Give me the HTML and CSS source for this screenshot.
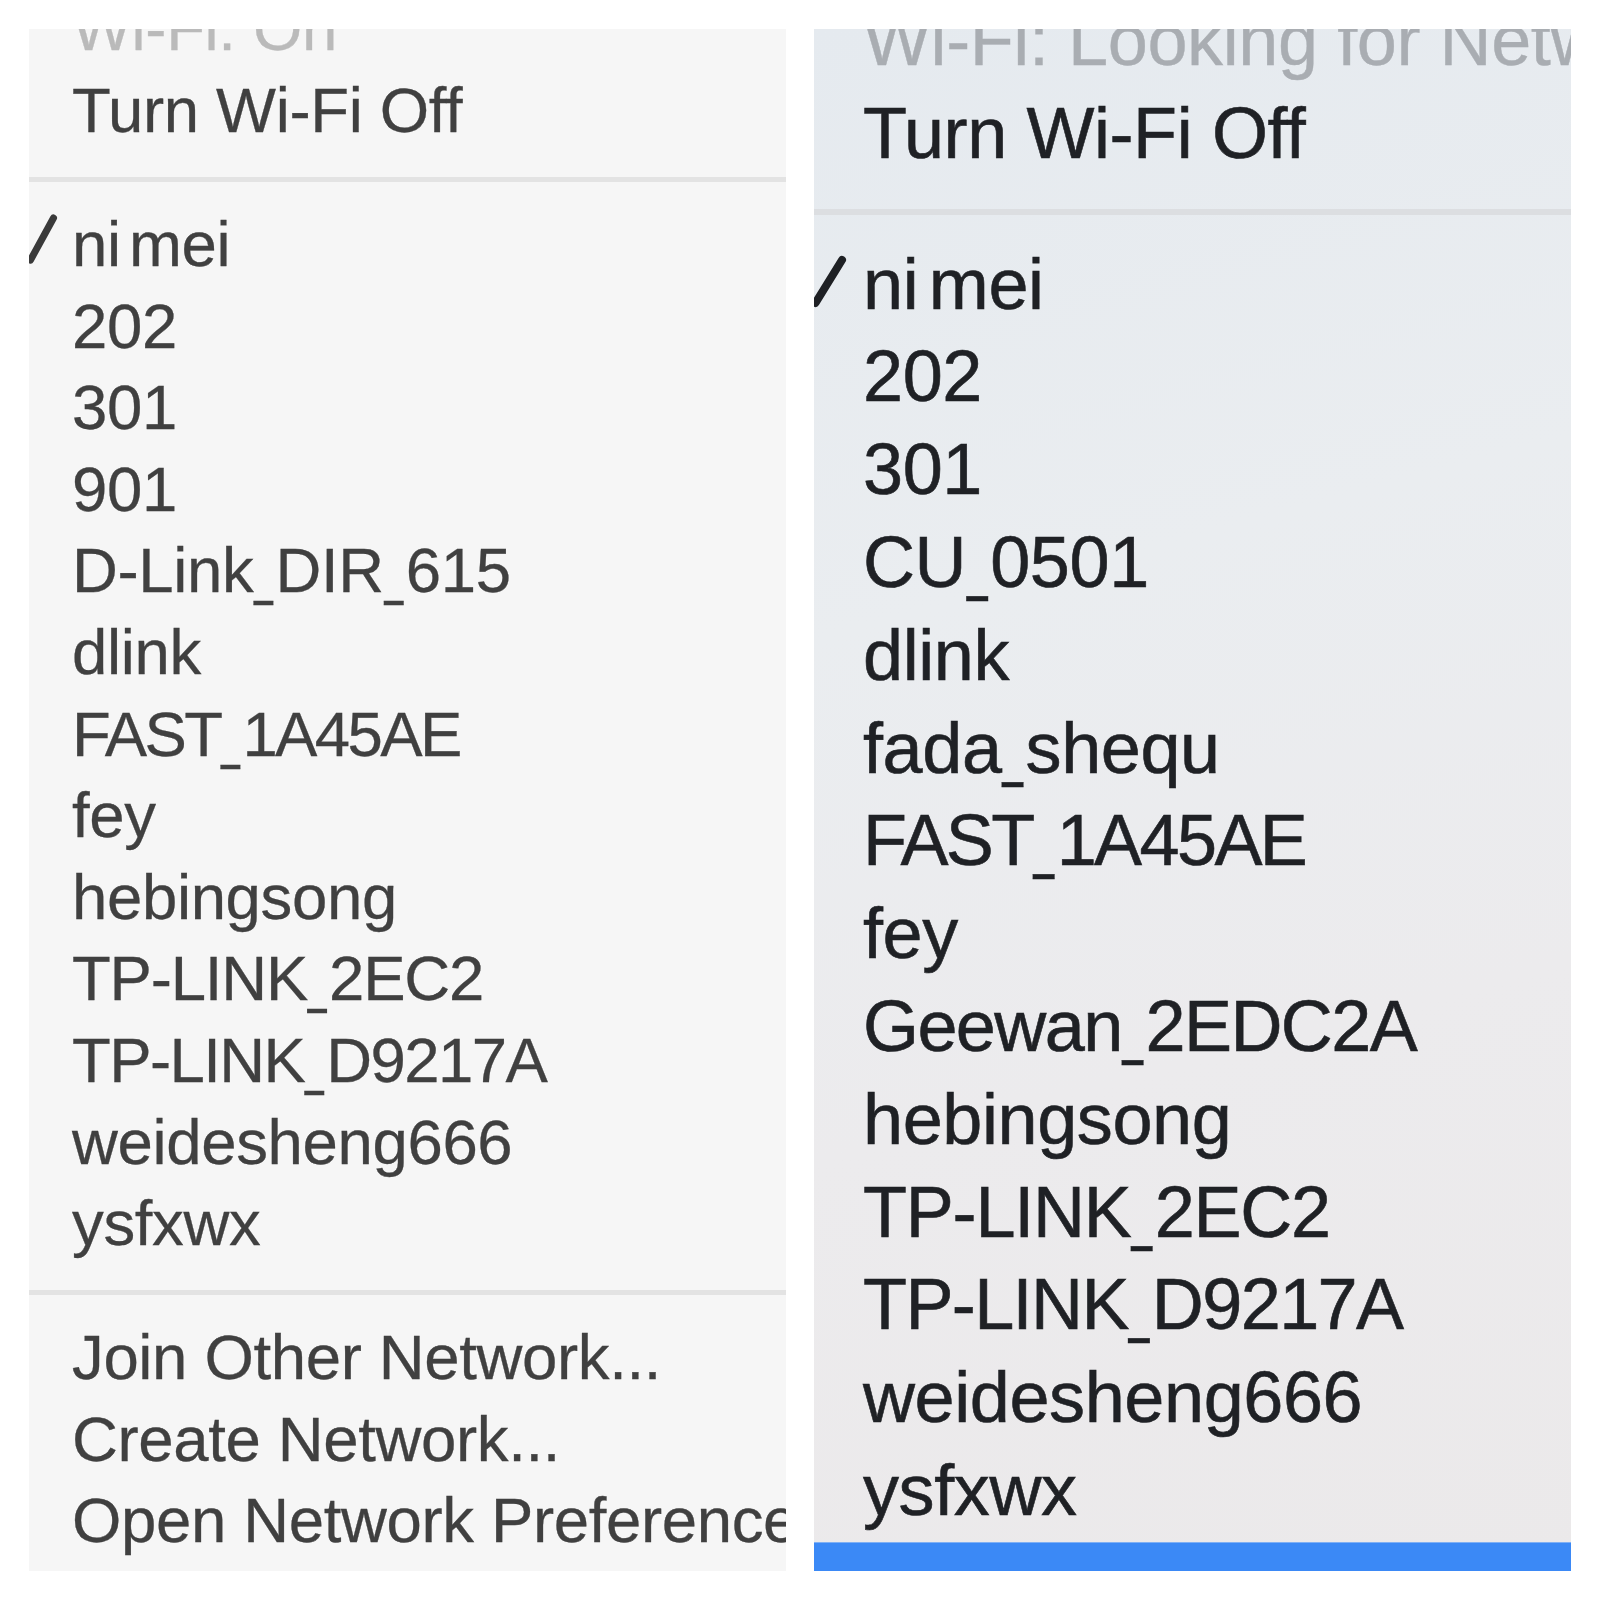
FILE: index.html
```html
<!DOCTYPE html>
<html lang="en">
<head>
<meta charset="utf-8">
<title>Wi-Fi menus</title>
<link rel="stylesheet" href="styles.css">
</head>
<body>
<div class="screen">
  <section class="menu menu-left">
    <div class="menu-inner">
      <div class="item title">Wi-Fi: On</div>
      <div class="item">Turn Wi-Fi Off</div>
      <div class="sep"></div>
      <div class="item checked"><span class="check"><svg viewBox="0 0 43 81.6" width="43" height="81.6"><path d="M1.5 56 L24.5 14" stroke="#3a3a3a" stroke-width="7" stroke-linecap="round" fill="none"/></svg></span><span class="tight">ni mei</span></div>
      <div class="item">202</div>
      <div class="item">301</div>
      <div class="item">901</div>
      <div class="item">D-Link<span class="us">_</span>DIR<span class="us">_</span>615</div>
      <div class="item">dlink</div>
      <div class="item caps-xl">FAST<span class="us">_</span>1A45AE</div>
      <div class="item">fey</div>
      <div class="item">hebingsong</div>
      <div class="item caps-s">TP-LINK<span class="us">_</span>2EC2</div>
      <div class="item caps">TP-LINK<span class="us">_</span>D9217A</div>
      <div class="item">weidesheng666</div>
      <div class="item">ysfxwx</div>
      <div class="sep sep-bottom"></div>
      <div class="item">Join Other Network...</div>
      <div class="item">Create Network...</div>
      <div class="item">Open Network Preferences...</div>
    </div>
  </section>
  <section class="menu menu-right">
    <div class="menu-inner">
      <div class="item title">Wi-Fi: Looking for Networks…</div>
      <div class="item">Turn Wi-Fi Off</div>
      <div class="sep"></div>
      <div class="item checked"><span class="check"><svg viewBox="0 0 49 92.8" width="49" height="92.8"><path d="M1.5 65 L28 22" stroke="#1e2024" stroke-width="8" stroke-linecap="round" fill="none"/></svg></span><span class="tight">ni mei</span></div>
      <div class="item">202</div>
      <div class="item">301</div>
      <div class="item">CU<span class="us">_</span>0501</div>
      <div class="item">dlink</div>
      <div class="item">fada<span class="us">_</span>shequ</div>
      <div class="item caps-xl">FAST<span class="us">_</span>1A45AE</div>
      <div class="item">fey</div>
      <div class="item caps">Geewan<span class="us">_</span>2EDC2A</div>
      <div class="item">hebingsong</div>
      <div class="item caps-s">TP-LINK<span class="us">_</span>2EC2</div>
      <div class="item caps">TP-LINK<span class="us">_</span>D9217A</div>
      <div class="item">weidesheng666</div>
      <div class="item">ysfxwx</div>
      <div class="highlight"></div>
    </div>
  </section>
</div>
</body>
</html>
```
FILE: styles.css
```css
html, body {
  margin: 0;
  padding: 0;
  background: #ffffff;
}

.screen {
  width: 1600px;
  height: 1600px;
  box-sizing: border-box;
  padding: 29px;
  display: flex;
  gap: 28px;
  align-items: stretch;
}

.menu {
  flex: 0 0 757px;
  height: 1542px;
  overflow: hidden;
  font-family: "Liberation Sans", Arial, sans-serif;
  white-space: nowrap;
}

.menu-inner {
  display: flex;
  flex-direction: column;
}

.item {
  display: flex;
  align-items: stretch;
}

.check {
  display: block;
  flex: 0 0 auto;
}

.check svg {
  display: block;
}

.tight {
  word-spacing: -9px;
}

/* narrower underscore, like the system font's */
.us {
  display: inline-block;
  letter-spacing: 0;
  clip-path: inset(0 0 0 0);
}

/* uppercase-heavy names: the system font's capitals are narrower */
.menu .caps-s { letter-spacing: -1.2px; }
.menu .caps { letter-spacing: -1.6px; }
.menu .caps-xl { letter-spacing: -2.6px; }

/* ---------- left menu ---------- */
.menu-left {
  background: #f6f6f6;
  color: #404040;
  font-size: 63.5px;
  letter-spacing: -0.35px;
  -webkit-text-stroke: 0.3px #404040;
}

.menu-left .menu-inner {
  margin-top: -40.6px;
}

.menu-left .item {
  height: 81.6px;
  line-height: 81.6px;
  padding-left: 43px;
}

.menu-left .item.checked {
  padding-left: 0;
}

.menu-left .title {
  color: #bababa;
  -webkit-text-stroke: 0.3px #bababa;
}

.menu-left .us {
  width: 20px;
  margin-right: 2px;
}

.menu-left .sep {
  height: 5px;
  margin: 25px 0 22.4px;
  background: #e3e3e3;
}

/* ---------- right menu ---------- */
.menu-right {
  background: linear-gradient(165deg, #e5eaef 0%, #eaedf0 35%, #ecebed 65%, #ebe9ea 100%);
  color: #1f2125;
  font-size: 72px;
  letter-spacing: -0.4px;
  -webkit-text-stroke: 0.6px #1f2125;
}

.menu-right .menu-inner {
  margin-top: -35.3px;
}

.menu-right .item {
  height: 92.8px;
  line-height: 92.8px;
  padding-left: 49px;
}

.menu-right .item.checked {
  padding-left: 0;
}

.menu-right .title {
  color: #a9adb2;
  -webkit-text-stroke: 0.4px #a9adb2;
}

.menu-right .us {
  width: 22px;
  margin-right: 2px;
}

.menu-right .sep {
  height: 6px;
  margin: 29.7px 0 22.7px;
  background: #dcdee1;
}

.menu-right .highlight {
  height: 40px;
  margin-top: 5.1px;
  background: #3b89f6;
  border-top: 1px solid #7fb0f5;
}
```
